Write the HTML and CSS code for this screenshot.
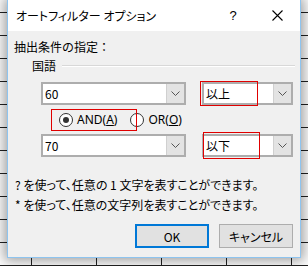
FILE: index.html
```html
<!DOCTYPE html>
<html lang="ja">
<head>
<meta charset="utf-8">
<link rel="stylesheet" href="styles.css">
</head>
<body>
<div class="dialog">
  <div class="titlebar">
    <span class="title">オートフィルター オプション</span>
    <span class="help">?</span>
    <span class="close"><svg width="11" height="11" viewBox="0 0 11 11"><path d="M0.5 0.5 L10.5 10.5 M10.5 0.5 L0.5 10.5" stroke="#000" stroke-width="1.1" fill="none"/></svg></span>
  </div>
  <div class="content">
    <div class="label">抽出条件の指定：</div>
    <div class="group"><span class="group-name">国語</span><span class="rule"></span></div>
    <div class="row">
      <div class="combo wide"><span class="value">60</span><span class="drop"><svg width="9" height="5" viewBox="0 0 9 5"><path d="M0.5 0.5 L4.5 4.5 L8.5 0.5" stroke="#555" fill="none"/></svg></span></div>
      <div class="combo narrow"><span class="value">以上</span><span class="drop"><svg width="9" height="5" viewBox="0 0 9 5"><path d="M0.5 0.5 L4.5 4.5 L8.5 0.5" stroke="#555" fill="none"/></svg></span><span class="mark mark-top"></span></div>
    </div>
    <div class="radios">
      <span class="mark mark-radio"></span>
      <label class="radio"><span class="circle checked"></span><span>AND(<u>A</u>)</span></label>
      <label class="radio"><span class="circle"></span><span>OR(<u>O</u>)</span></label>
    </div>
    <div class="row row2">
      <div class="combo wide"><span class="value">70</span><span class="drop"><svg width="9" height="5" viewBox="0 0 9 5"><path d="M0.5 0.5 L4.5 4.5 L8.5 0.5" stroke="#555" fill="none"/></svg></span></div>
      <div class="combo narrow"><span class="value">以下</span><span class="drop"><svg width="9" height="5" viewBox="0 0 9 5"><path d="M0.5 0.5 L4.5 4.5 L8.5 0.5" stroke="#555" fill="none"/></svg></span><span class="mark mark-bottom"></span></div>
    </div>
    <div class="hints">
      <div>? を使って、任意の 1 文字を表すことができます。</div>
      <div>* を使って、任意の文字列を表すことができます。</div>
    </div>
    <div class="buttons">
      <button class="btn default">OK</button>
      <button class="btn">キャンセル</button>
    </div>
  </div>
</div>
</body>
</html>
```
FILE: styles.css
```css
html, body {
  margin: 0;
  padding: 0;
}
body {
  width: 308px;
  height: 266px;
  overflow: hidden;
  background-color: #fff;
  background-image:
    repeating-linear-gradient(90deg, transparent 0 31px, #222 31px 32px, transparent 32px 65px),
    repeating-linear-gradient(180deg, transparent 0 12px, #222 12px 13px, transparent 13px 23px);
  font-family: "Noto Sans CJK JP", sans-serif;
  font-size: 12px;
  color: #000;
  font-feature-settings: "palt";
}
.dialog {
  margin-left: 7px;
  width: 294px;
  height: 258px;
  box-sizing: border-box;
  border: 1px solid #8ec4ef;
  border-top: none;
  background: #f0f0f0;
  box-shadow: 0 0 12px 3px rgba(0, 0, 0, 0.38);
  display: flex;
  flex-direction: column;
}
.titlebar {
  height: 31px;
  flex: none;
  background: #fff;
  display: flex;
  align-items: center;
  padding-left: 8px;
  padding-right: 8px;
}
.title {
  font-size: 12px;
  line-height: 14px;
}
.help {
  margin-left: auto;
  width: 30px;
  text-align: center;
  font-size: 13px;
  font-family: "Liberation Sans", sans-serif;
}
.close {
  margin-left: 14px;
  width: 30px;
  display: flex;
  justify-content: center;
}
.close svg {
  display: block;
}
.content {
  padding: 0 5px 0 6px;
  display: flex;
  flex-direction: column;
}
.label {
  margin-top: 9px;
  line-height: 14px;
  font-feature-settings: normal;
}
.group {
  margin-top: 5px;
  padding-left: 18px;
  display: flex;
  align-items: center;
  line-height: 14px;
}
.rule {
  flex: 1;
  margin-left: 6px;
  border-top: 1px solid #d8d8d8;
  border-bottom: 1px solid #fff;
}
.row {
  margin-top: 9px;
  padding-left: 27px;
  display: flex;
  gap: 16px;
}
.row2 {
  margin-top: 3px;
}
.combo {
  position: relative;
  height: 23px;
  box-sizing: border-box;
  border: 2px solid #adadad;
  background: #fff;
  display: flex;
  align-items: center;
}
.wide {
  width: 145px;
}
.narrow {
  width: 91px;
}
.value {
  flex: 1;
  padding-left: 2px;
  line-height: 14px;
  font-size: 12px;
}
.drop {
  width: 17px;
  align-self: stretch;
  background: #e3e3e3;
  border-left: 1px solid #d0d0d0;
  display: flex;
  align-items: center;
  justify-content: center;
}
.drop svg {
  display: block;
}
.mark {
  position: absolute;
  border: 1px solid #e00000;
  box-sizing: border-box;
  pointer-events: none;
}
.mark-top {
  left: -4px;
  top: -3px;
  width: 58px;
  height: 25px;
}
.mark-bottom {
  left: -1px;
  top: -4px;
  width: 57px;
  height: 27px;
}
.radios {
  position: relative;
  margin-top: 4px;
  height: 22px;
  padding-left: 45px;
  display: flex;
  align-items: center;
  gap: 13px;
}
.mark-radio {
  left: 37px;
  top: 0;
  width: 86px;
  height: 22px;
}
.radio {
  display: flex;
  align-items: center;
  gap: 4px;
  font-family: "Noto Sans", sans-serif;
  font-size: 12px;
  line-height: 14px;
}
.circle {
  width: 14px;
  height: 14px;
  box-sizing: border-box;
  border: 1px solid #333;
  border-radius: 50%;
  background: #fff;
  display: flex;
  align-items: center;
  justify-content: center;
}
.circle.checked::after {
  content: "";
  width: 6px;
  height: 6px;
  border-radius: 50%;
  background: #333;
}
.hints {
  margin-top: 18px;
  padding-left: 1px;
  line-height: 20px;
}
.buttons {
  margin-top: 9px;
  padding-right: 2px;
  display: flex;
  justify-content: flex-end;
  gap: 10px;
}
.btn {
  width: 74px;
  height: 24px;
  box-sizing: border-box;
  margin: 0;
  padding: 0;
  border: 1px solid #adadad;
  background: #e1e1e1;
  font-family: "Noto Sans CJK JP", sans-serif;
  font-feature-settings: "palt";
  font-size: 12px;
  color: #000;
}
.btn.default {
  border: 2px solid #0078d7;
}
```
